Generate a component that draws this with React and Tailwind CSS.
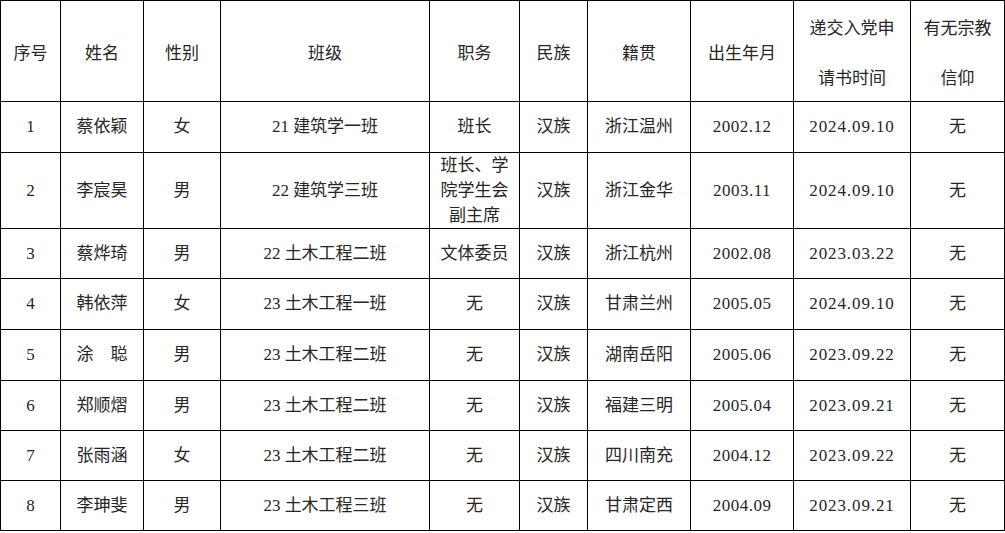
import React from 'react';

const cols = [60, 83, 77, 209, 90, 68, 103, 103, 117, 94];

const rows = [
  { h: 51, d: ['1', '蔡依颖', '女', '21 建筑学一班', '班长', '汉族', '浙江温州', '2002.12', '2024.09.10', '无'] },
  { h: 76, d: ['2', '李宸昊', '男', '22 建筑学三班', ['班长、学', '院学生会', '副主席'], '汉族', '浙江金华', '2003.11', '2024.09.10', '无'] },
  { h: 50, d: ['3', '蔡烨琦', '男', '22 土木工程二班', '文体委员', '汉族', '浙江杭州', '2002.08', '2023.03.22', '无'] },
  { h: 51, d: ['4', '韩依萍', '女', '23 土木工程一班', '无', '汉族', '甘肃兰州', '2005.05', '2024.09.10', '无'] },
  { h: 51, d: ['5', '涂　聪', '男', '23 土木工程二班', '无', '汉族', '湖南岳阳', '2005.06', '2023.09.22', '无'] },
  { h: 50, d: ['6', '郑顺熠', '男', '23 土木工程二班', '无', '汉族', '福建三明', '2005.04', '2023.09.21', '无'] },
  { h: 50, d: ['7', '张雨涵', '女', '23 土木工程二班', '无', '汉族', '四川南充', '2004.12', '2023.09.22', '无'] },
  { h: 50, d: ['8', '李珅斐', '男', '23 土木工程三班', '无', '汉族', '甘肃定西', '2004.09', '2023.09.21', '无'] },
];

const header = ['序号', '姓名', '性别', '班级', '职务', '民族', '籍贯', '出生年月', ['递交入党申', '请书时间'], ['有无宗教', '信仰']];

function Cell({ v, head }) {
  if (Array.isArray(v)) {
    return (
      <div className={head ? 'leading-[50px] translate-y-[3px]' : 'leading-[25px]'}>
        {v.map((l) => (
          <div key={l}>{l}</div>
        ))}
      </div>
    );
  }
  return <div className={head ? 'translate-y-[3px]' : ''}>{v}</div>;
}

export default function App() {
  return (
    <div className="w-[1005px] h-[533px] bg-white overflow-hidden">
      <table
        className="table-fixed border-collapse text-[17px] text-[#262626] text-center"
        style={{ width: 1005 }}
      >
        <colgroup>
          {cols.map((w, i) => (
            <col key={i} style={{ width: w }} />
          ))}
        </colgroup>
        <tbody className="font-['Liberation_Serif','Noto_Sans_CJK_SC',serif]">
          <tr className="h-[101px]">
            {header.map((v, i) => (
              <td key={i} className="border border-black p-0 align-middle font-normal">
                <Cell v={v} head />
              </td>
            ))}
          </tr>
          {rows.map((r) => (
            <tr key={r.d[0]} style={{ height: r.h }}>
              {r.d.map((v, i) => (
                <td
                  key={i}
                  className={`border border-black p-0 align-middle ${i === 8 ? 'tracking-[0.9px]' : i === 7 ? 'tracking-[0.5px]' : ''}`}
                >
                  <Cell v={v} />
                </td>
              ))}
            </tr>
          ))}
        </tbody>
      </table>
    </div>
  );
}
